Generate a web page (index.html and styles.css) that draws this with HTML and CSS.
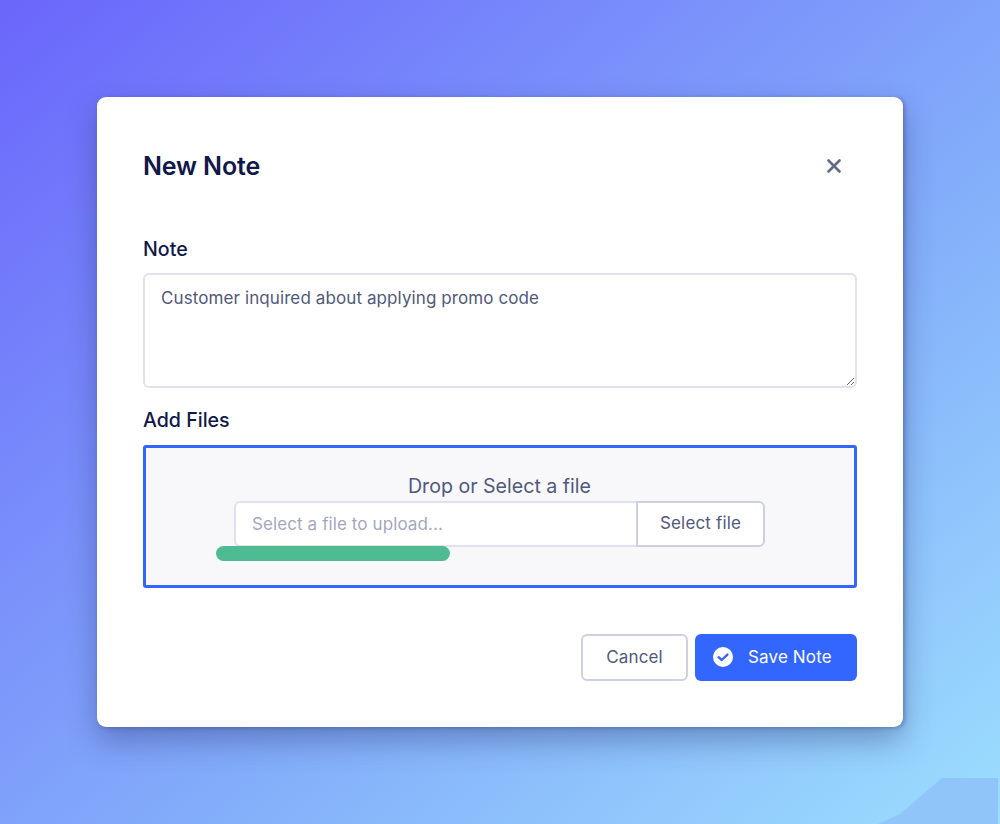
FILE: index.html
```html
<!DOCTYPE html>
<html lang="en">
<head>
<meta charset="utf-8">
<title>New Note</title>
<link rel="stylesheet" href="styles.css">
</head>
<body>
<svg class="corner" viewBox="0 0 122 46" aria-hidden="true"><path d="M0 46 L22 36 L36 24 L64 0 H120 V46 Z"/></svg>
<main class="modal">
  <header class="modal-head">
    <h1 class="title">New Note</h1>
    <button class="close" aria-label="Close">
      <svg width="14" height="14" viewBox="0 0 14 14"><path d="M1.5 1.5 L12.5 12.5 M12.5 1.5 L1.5 12.5"/></svg>
    </button>
  </header>
  <label class="label label-note" for="note">Note</label>
  <textarea id="note" class="note">Customer inquired about applying promo code</textarea>
  <div class="label label-files">Add Files</div>
  <section class="drop">
    <div class="drop-title">Drop or Select a file</div>
    <div class="file-row">
      <div class="file-input">Select a file to upload...</div>
      <button class="file-btn">Select file</button>
      <div class="progress"></div>
    </div>
  </section>
  <footer class="actions">
    <button class="btn btn-cancel">Cancel</button>
    <button class="btn btn-save">
      <svg width="22" height="22" viewBox="0 0 22 22"><circle cx="11" cy="11" r="10" fill="#fff"/><path d="M6.6 11.2 L9.8 14 L15.4 8.6" fill="none" stroke="#3366ff" stroke-width="2.4" stroke-linecap="round" stroke-linejoin="round"/></svg>
      <span>Save Note</span>
    </button>
  </footer>
</main>
</body>
</html>
```

FILE: styles.css
```css
* { box-sizing: border-box; }
html, body { height: 100%; }
body {
  margin: 0;
  height: 824px;
  overflow: hidden;
  padding: 97px 97px 0;
  font-family: Inter, "Liberation Sans", sans-serif;
  background: linear-gradient(140deg, #6a66fb 0%, #7a90fb 35%, #83aefa 60%, #9cdefe 100%);
  position: relative;
}
.corner {
  position: absolute;
  left: 878px;
  top: 778px;
  width: 122px;
  height: 46px;
}
.corner path { fill: #8fc5f8; }
.modal {
  position: relative;
  width: 806px;
  height: 630px;
  background: #fff;
  border-radius: 9px;
  padding: 46px;
  box-shadow: 0 14px 30px rgba(40, 50, 110, 0.38), 2px 1px 4px rgba(40, 50, 110, 0.35);
  display: flex;
  flex-direction: column;
}
.modal-head {
  display: flex;
  align-items: center;
  justify-content: space-between;
  height: 46px;
  margin-bottom: 48px;
}
.title {
  margin: 0;
  font-size: 25px;
  line-height: 46px;
  font-weight: 600;
  color: #10194a;
  letter-spacing: -0.15px;
}
.close {
  border: 0;
  background: none;
  padding: 0;
  width: 14px;
  height: 14px;
  margin-right: 16px;
  display: block;
}
.close svg { display: block; }
.close path { stroke: #636a87; stroke-width: 2.6; fill: none; stroke-linecap: round; }
.label {
  display: block;
  font-size: 19.6px;
  line-height: 24px;
  font-weight: 500;
  color: #10194a;
}
.label-note { margin-bottom: 12px; }
.label-files { margin-top: 20px; margin-bottom: 13px; }
.note {
  display: block;
  width: 714px;
  height: 115px;
  flex: none;
  border: 2px solid #e0e1ee;
  border-radius: 6px;
  padding: 12px 16px;
  font-family: inherit;
  font-size: 17px;
  line-height: 22px;
  letter-spacing: 0.1px;
  color: #50597b;
  outline: none;
  resize: vertical;
  background: #fff;
}
.drop {
  width: 714px;
  height: 143px;
  flex: none;
  border: 3px solid #3366ff;
  border-radius: 3px;
  background: #f8f8fb;
  display: flex;
  flex-direction: column;
  align-items: center;
  padding-top: 26px;
}
.drop-title {
  font-size: 19.6px;
  line-height: 24px;
  color: #50597b;
  margin-bottom: 3px;
  margin-right: 1px;
}
.file-row {
  position: relative;
  display: flex;
  width: 531px;
  height: 46px;
  margin-right: 1px;
}
.file-input {
  width: 402px;
  background: #fff;
  border: 2px solid #e0e1ee;
  border-right: 0;
  border-radius: 6px 0 0 6px;
  padding: 0 16px;
  font-size: 17px;
  line-height: 43px;
  letter-spacing: 0.1px;
  color: #a3a8bf;
}
.file-btn {
  width: 129px;
  background: #fff;
  border: 2px solid #cdd0df;
  border-radius: 0 6px 6px 0;
  font-family: inherit;
  font-size: 17px;
  letter-spacing: 0.15px;
  color: #50597b;
  padding: 0 0 3px;
}
.progress {
  position: absolute;
  left: -18px;
  top: 45px;
  width: 234px;
  height: 15px;
  border-radius: 8px;
  background: #4fbb92;
}
.actions {
  display: flex;
  justify-content: flex-end;
  gap: 7px;
  margin-top: 46px;
}
.btn {
  height: 47px;
  border-radius: 6px;
  font-family: inherit;
  font-size: 17px;
  letter-spacing: 0.15px;
  font-weight: 400;
  padding: 0 0 2px;
}
.btn-cancel {
  width: 107px;
  background: #fff;
  border: 2px solid #cdd0df;
  color: #50597b;
}
.btn-save {
  width: 162px;
  background: #3366ff;
  border: 0;
  color: #fff;
  display: flex;
  align-items: center;
  padding: 0 0 2px 17px;
  gap: 14px;
}
```
